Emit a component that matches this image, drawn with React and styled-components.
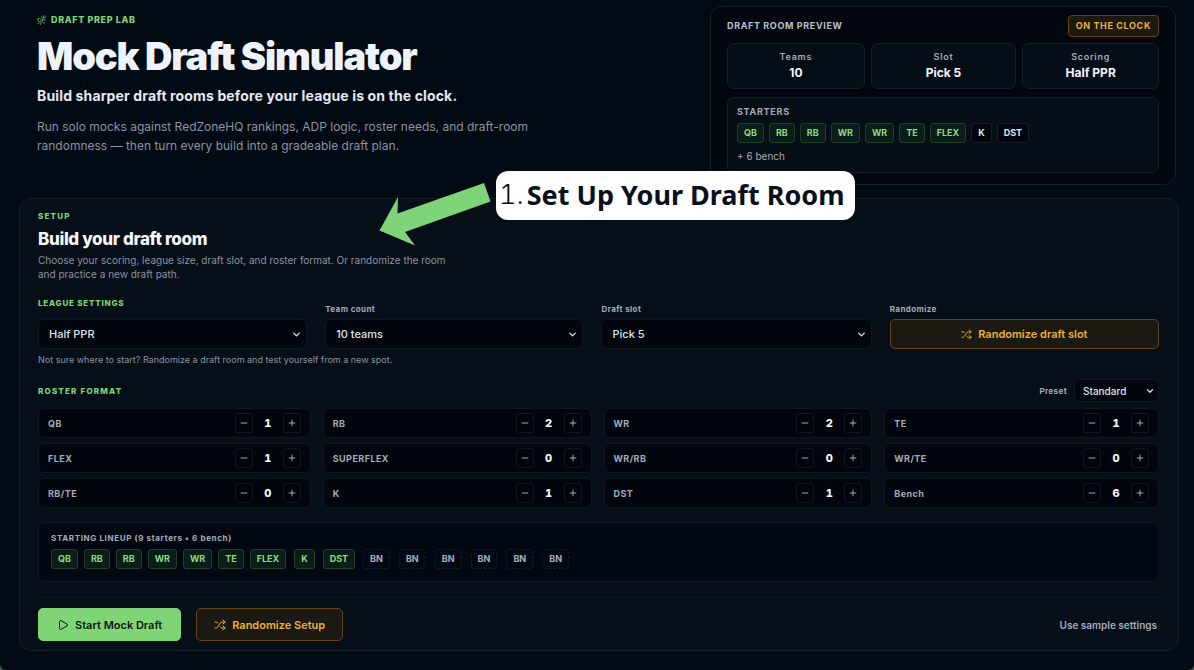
import React, { useState } from 'react';
import styled, { createGlobalStyle, css } from 'styled-components';
import { ChevronDown, Minus, Play, Plus, Shuffle } from 'lucide-react';

const colors = {
    page: '#020a13',
    panel: '#060e18',
    preview: '#02070f',
    well: '#01050d',
    border: '#161e27',
    softBorder: '#11171f',
    white: '#f4f6fa',
    text: '#dfe3ea',
    label: '#a3acba',
    muted: '#8a93a1',
    green: '#7fd576',
    gold: '#e9b233',
    goldBg: '#1c1812',
    goldBorder: '#65450f'
};

const GlobalStyle = createGlobalStyle`
    * { box-sizing: border-box; }
    body {
        margin: 0;
        background: #3d5548;
        font-family: Inter, "Liberation Sans", sans-serif;
        color: ${colors.text};
    }
    button, select { font-family: inherit; }
    h1, h2, h3, p { margin: 0; }
`;

const Page = styled.main`
    position: relative;
    min-height: 100vh;
    padding: 6px 15px 18px 19px;
    background: ${colors.page};
    border-radius: 0 0 6px 6px;
`;

const Header = styled.header`
    display: grid;
    grid-template-columns: minmax(0, 1fr) minmax(0, 466px);
    gap: 24px;
    padding: 0 3px 0 18px;
    margin-bottom: 13px;
`;

const Hero = styled.div`
    padding-top: 8px;
`;

const caps = css`
    font-size: 8px;
    line-height: 12px;
    font-weight: 800;
    letter-spacing: 0.1em;
`;

const Eyebrow = styled.p`
    ${caps};
    display: flex;
    align-items: center;
    gap: 4px;
    color: ${colors.green};
    font-size: ${props => props.$large ? '9px' : '8px'};
    letter-spacing: ${props => props.$large ? '0.07em' : '0.15em'};
`;

const Title = styled.h1`
    margin-top: 6px;
    font-size: 38px;
    line-height: 48px;
    font-weight: 900;
    letter-spacing: -0.03em;
    color: #eef2fa;
`;

const Lead = styled.p`
    margin-top: 6px;
    font-size: 14px;
    line-height: 20px;
    font-weight: 700;
    letter-spacing: 0.01em;
    color: #e4e8ef;
`;

const Body = styled.p`
    max-width: 500px;
    margin-top: 11px;
    font-size: 12px;
    line-height: 19px;
    color: ${colors.muted};
`;

const Preview = styled.aside`
    padding: 8px 16px 11px;
    background: ${colors.preview};
    border: 1px solid ${colors.border};
    border-radius: 12px;
`;

const PreviewHead = styled.div`
    display: flex;
    align-items: center;
    justify-content: space-between;
`;

const PreviewTitle = styled.h2`
    font-size: 9px;
    line-height: 12px;
    font-weight: 700;
    letter-spacing: 0.07em;
    color: #b9c0cc;
`;

const Clock = styled.span`
    padding: 4px 7px;
    font-size: 9px;
    line-height: 12px;
    font-weight: 700;
    letter-spacing: 0.07em;
    color: ${colors.gold};
    background: ${colors.goldBg};
    border: 1px solid ${colors.goldBorder};
    border-radius: 4px;
`;

const Tiles = styled.div`
    display: grid;
    grid-template-columns: 138fr 146fr 137fr;
    gap: 6px;
    margin-top: 6px;
`;

const Tile = styled.div`
    display: flex;
    flex-direction: column;
    align-items: center;
    padding: 6px 8px;
    background: #050d17;
    border: 1px solid ${colors.border};
    border-radius: 7px;
`;

const TileLabel = styled.span`
    font-size: 9px;
    line-height: 14px;
    font-weight: 600;
    letter-spacing: 0.08em;
    color: ${colors.label};
`;

const TileValue = styled.span`
    font-size: 12px;
    line-height: 18px;
    font-weight: 700;
    color: ${colors.white};
`;

const Starters = styled.div`
    margin-top: 8px;
    padding: 8px 9px 9px;
    background: #050d17;
    border: 1px solid ${colors.border};
    border-radius: 7px;
`;

const SmallTitle = styled.h3`
    margin-bottom: 5px;
    font-size: ${props => props.$compact ? '8px' : '9px'};
    line-height: 12px;
    font-weight: 700;
    letter-spacing: 0.08em;
    color: ${colors.label};
`;

const Chips = styled.div`
    display: flex;
    flex-wrap: wrap;
    gap: ${props => props.$gap}px;
`;

const chipTone = {
    green: css`
        color: #86dc7d;
        background: #0a1d18;
        border: 1px solid #1f3f27;
    `,
    plain: css`
        color: ${colors.text};
        background: ${colors.well};
        border: 1px solid ${colors.border};
    `,
    bench: css`
        color: #a7afbc;
        border: 1px dashed #151c26;
    `
};

const Chip = styled.span`
    padding: 0 6px;
    font-size: 9px;
    line-height: 18px;
    font-weight: 700;
    border-radius: 3px;
    ${props => chipTone[props.$tone]};
`;

const BenchNote = styled.p`
    margin-top: 6px;
    font-size: 10px;
    line-height: 14px;
    color: ${colors.label};
`;

const Setup = styled.section`
    padding: 11px 19px 9px 18px;
    background: ${colors.panel};
    border: 1px solid ${colors.border};
    border-radius: 12px;
`;

const SetupTitle = styled.h2`
    margin-top: 6px;
    font-size: 17px;
    line-height: 22px;
    font-weight: 800;
    letter-spacing: -0.02em;
    color: ${colors.white};
`;

const SetupText = styled.p`
    max-width: 420px;
    margin-top: 3px;
    font-size: 10px;
    line-height: 14px;
    color: ${colors.muted};
`;

const League = styled.div`
    display: grid;
    grid-template-columns: 269fr 258fr 270fr 269fr;
    gap: 18px;
    margin-top: 16px;
`;

const Field = styled.div`
    display: flex;
    flex-direction: column;
    justify-content: space-between;
    min-height: 52px;
    padding-top: ${props => props.$heading ? '0' : '6px'};
`;

const FieldLabel = styled.label`
    font-size: 8px;
    line-height: 12px;
    font-weight: 700;
    letter-spacing: 0.05em;
    color: ${colors.label};
`;

const HeadingLabel = styled.label`
    ${caps};
    color: ${colors.green};
`;

const SelectBox = styled.div`
    display: grid;
    align-items: center;
    > * { grid-area: 1 / 1; }
    svg {
        justify-self: end;
        margin-right: ${props => props.$small ? '4px' : '5px'};
        pointer-events: none;
    }
`;

const SelectInput = styled.select`
    width: 100%;
    height: ${props => props.$small ? '23px' : '30px'};
    padding: 0 24px 0 ${props => props.$small ? '8px' : '10px'};
    appearance: none;
    font-size: ${props => props.$small ? '10px' : '11px'};
    font-weight: 500;
    color: ${colors.text};
    background: ${colors.well};
    border: 1px solid ${colors.softBorder};
    border-radius: 6px;
`;

const goldButton = css`
    color: ${colors.gold};
    background: ${colors.goldBg};
    border: 1px solid ${colors.goldBorder};
`;

const Button = styled.button`
    display: flex;
    align-items: center;
    justify-content: center;
    gap: 6px;
    height: ${props => props.$short ? '30px' : '33px'};
    padding: 0 ${props => props.$primary ? '18px' : '17px'};
    font-size: 11px;
    font-weight: 600;
    border-radius: 5px;
    ${props => props.$primary ? css`
        color: #07170d;
        background: ${colors.green};
        border: 1px solid ${colors.green};
    ` : goldButton};
`;

const Hint = styled.p`
    margin-top: 4px;
    font-size: 9px;
    line-height: 14px;
    color: ${colors.muted};
`;

const RosterHead = styled.div`
    display: flex;
    align-items: center;
    justify-content: space-between;
    margin-top: 12px;
`;

const Preset = styled.div`
    display: flex;
    align-items: center;
    gap: 7px;
    ${SelectBox} { width: 85px; }
`;

const RosterGrid = styled.div`
    display: grid;
    grid-template-columns: 273fr 269fr 269fr 275fr;
    gap: 5px 12px;
    margin-top: 6px;
`;

const RosterRow = styled.div`
    display: flex;
    align-items: center;
    justify-content: space-between;
    height: 30px;
    padding: 0 9px;
    background: ${colors.well};
    border: 1px solid ${colors.softBorder};
    border-radius: 6px;
`;

const RosterName = styled.span`
    font-size: 9px;
    font-weight: 700;
    letter-spacing: 0.05em;
    color: ${colors.label};
`;

const Stepper = styled.div`
    display: flex;
    align-items: center;
`;

const StepButton = styled.button`
    display: flex;
    align-items: center;
    justify-content: center;
    width: 18px;
    height: 20px;
    padding: 0;
    color: #c0c5ce;
    background: transparent;
    border: 1px solid ${colors.softBorder};
    border-radius: 3px;
`;

const StepValue = styled.output`
    width: 30px;
    text-align: center;
    font-size: 11px;
    font-weight: 800;
    font-variant-numeric: tabular-nums;
    color: ${colors.white};
`;

const Lineup = styled.div`
    margin-top: 14px;
    padding: 9px 12px 12px;
    background: #020811;
    border: 1px solid ${colors.softBorder};
    border-radius: 7px;
`;

const Actions = styled.div`
    display: flex;
    align-items: center;
    gap: 15px;
    margin-top: 15px;
    padding-top: 10px;
    border-top: 1px solid ${colors.softBorder};
`;

const SampleButton = styled.button`
    margin-left: auto;
    padding: 0 2px;
    font-size: 10px;
    line-height: 16px;
    font-weight: 600;
    color: ${colors.label};
    background: none;
    border: 0;
`;

const Callout = styled.div`
    position: absolute;
    top: 171px;
    left: 379px;
    display: flex;
    gap: 5px;
`;

const CalloutLabel = styled.div`
    display: flex;
    align-items: center;
    gap: 3px;
    height: 49px;
    padding: 0 11px 3px 3px;
    font-family: "Noto Sans", sans-serif;
    font-size: 27px;
    font-weight: 700;
    white-space: nowrap;
    color: #07101b;
    background: #fff;
    border-radius: 12px;
`;

const CalloutNumber = styled.span`
    font-family: Inter, sans-serif;
    font-weight: 300;
    font-variant-numeric: tabular-nums;
`;

const SKILL = ['QB', 'RB', 'RB', 'WR', 'WR', 'TE', 'FLEX'];
const SPECIAL = ['K', 'DST'];
const BENCH = ['BN', 'BN', 'BN', 'BN', 'BN', 'BN'];

const ROSTER = [
    ['QB', 1], ['RB', 2], ['WR', 2], ['TE', 1],
    ['FLEX', 1], ['SUPERFLEX', 0], ['WR/RB', 0], ['WR/TE', 0],
    ['RB/TE', 0], ['K', 1], ['DST', 1], ['Bench', 6]
];

const LabIcon = () => (
    <svg width="10" height="10" viewBox="0 0 20 20" fill="none" stroke="#5fa65c" strokeWidth="1.8" strokeLinecap="round" aria-hidden="true">
        <path d="M2 8c2-2 5-1 6 1s-1 4-3 4-4-2-3-5z" />
        <path d="M10 2c-1 2-1 4 1 6M14 1c-2 2-2 4 0 6M18 3c-3 1-6 4-7 7" />
        <path d="M11 11c3 0 5-1 7-3M10 12c0 3 2 5 5 4M8 14l-1 5M4 15l-1 3" />
    </svg>
);

const Arrow = () => (
    <svg width="112" height="76" viewBox="0 0 112 76" aria-hidden="true">
        <polygon fill="#7ed477" points="0.5,59.5 19,26 18.5,42.5 105,12 111.5,30.5 26,61 36,74.5" />
    </svg>
);

const Select = ({ id, options, small }) => (
    <SelectBox $small={small}>
        <SelectInput id={id} $small={small}>
            {options.map(option => <option key={option}>{option}</option>)}
        </SelectInput>
        <ChevronDown size={small ? 10 : 11} strokeWidth={3} />
    </SelectBox>
);

const ChipList = ({ items, tone, gap }) => (
    <Chips $gap={gap}>
        {items.map((item, index) => <Chip key={index} $tone={tone}>{item}</Chip>)}
    </Chips>
);

const RosterItem = ({ name, initial }) => {
    const [count, setCount] = useState(initial);

    return (
        <RosterRow>
            <RosterName>{name}</RosterName>
            <Stepper>
                <StepButton type="button" aria-label={`Remove ${name}`} onClick={() => setCount(Math.max(0, count - 1))}>
                    <Minus size={10} strokeWidth={2} />
                </StepButton>
                <StepValue aria-label={name}>{count}</StepValue>
                <StepButton type="button" aria-label={`Add ${name}`} onClick={() => setCount(count + 1)}>
                    <Plus size={10} strokeWidth={2} />
                </StepButton>
            </Stepper>
        </RosterRow>
    );
};

const DraftPreview = () => (
    <Preview>
        <PreviewHead>
            <PreviewTitle>DRAFT ROOM PREVIEW</PreviewTitle>
            <Clock>ON THE CLOCK</Clock>
        </PreviewHead>
        <Tiles>
            <Tile><TileLabel>Teams</TileLabel><TileValue>10</TileValue></Tile>
            <Tile><TileLabel>Slot</TileLabel><TileValue>Pick 5</TileValue></Tile>
            <Tile><TileLabel>Scoring</TileLabel><TileValue>Half PPR</TileValue></Tile>
        </Tiles>
        <Starters>
            <SmallTitle>STARTERS</SmallTitle>
            <Chips $gap={5}>
                <ChipList items={SKILL} tone="green" gap={5} />
                <ChipList items={SPECIAL} tone="plain" gap={5} />
            </Chips>
            <BenchNote>+ 6 bench</BenchNote>
        </Starters>
    </Preview>
);

export default function App() {
    return (
        <>
            <GlobalStyle />
            <Page>
                <Header>
                    <Hero>
                        <Eyebrow $large><LabIcon />DRAFT PREP LAB</Eyebrow>
                        <Title>Mock Draft Simulator</Title>
                        <Lead>Build sharper draft rooms before your league is on the clock.</Lead>
                        <Body>
                            Run solo mocks against RedZoneHQ rankings, ADP logic, roster needs, and draft-room
                            randomness — then turn every build into a gradeable draft plan.
                        </Body>
                    </Hero>
                    <DraftPreview />
                </Header>

                <Setup>
                    <Eyebrow>SETUP</Eyebrow>
                    <SetupTitle>Build your draft room</SetupTitle>
                    <SetupText>
                        Choose your scoring, league size, draft slot, and roster format. Or randomize the room
                        and practice a new draft path.
                    </SetupText>

                    <League>
                        <Field $heading>
                            <HeadingLabel htmlFor="scoring">LEAGUE SETTINGS</HeadingLabel>
                            <Select id="scoring" options={['Half PPR', 'PPR', 'Standard']} />
                        </Field>
                        <Field>
                            <FieldLabel htmlFor="teams">Team count</FieldLabel>
                            <Select id="teams" options={['10 teams', '12 teams']} />
                        </Field>
                        <Field>
                            <FieldLabel htmlFor="slot">Draft slot</FieldLabel>
                            <Select id="slot" options={['Pick 5', 'Pick 6']} />
                        </Field>
                        <Field>
                            <FieldLabel htmlFor="randomize">Randomize</FieldLabel>
                            <Button id="randomize" type="button" $short>
                                <Shuffle size={11} strokeWidth={2} />Randomize draft slot
                            </Button>
                        </Field>
                    </League>
                    <Hint>Not sure where to start? Randomize a draft room and test yourself from a new spot.</Hint>

                    <RosterHead>
                        <Eyebrow as="h3">ROSTER FORMAT</Eyebrow>
                        <Preset>
                            <FieldLabel htmlFor="preset">Preset</FieldLabel>
                            <Select id="preset" options={['Standard', 'Superflex']} small />
                        </Preset>
                    </RosterHead>
                    <RosterGrid>
                        {ROSTER.map(([name, count]) => <RosterItem key={name} name={name} initial={count} />)}
                    </RosterGrid>

                    <Lineup>
                        <SmallTitle $compact>STARTING LINEUP (9 starters • 6 bench)</SmallTitle>
                        <Chips $gap={8}>
                            <ChipList items={SKILL} tone="green" gap={6} />
                            <ChipList items={SPECIAL} tone="green" gap={8} />
                            <ChipList items={BENCH} tone="bench" gap={9} />
                        </Chips>
                    </Lineup>

                    <Actions>
                        <Button type="button" $primary><Play size={12} strokeWidth={2} />Start Mock Draft</Button>
                        <Button type="button"><Shuffle size={12} strokeWidth={2} />Randomize Setup</Button>
                        <SampleButton type="button">Use sample settings</SampleButton>
                    </Actions>
                </Setup>

                <Callout>
                    <Arrow />
                    <CalloutLabel><CalloutNumber>1.</CalloutNumber>Set Up Your Draft Room</CalloutLabel>
                </Callout>
            </Page>
        </>
    );
}
